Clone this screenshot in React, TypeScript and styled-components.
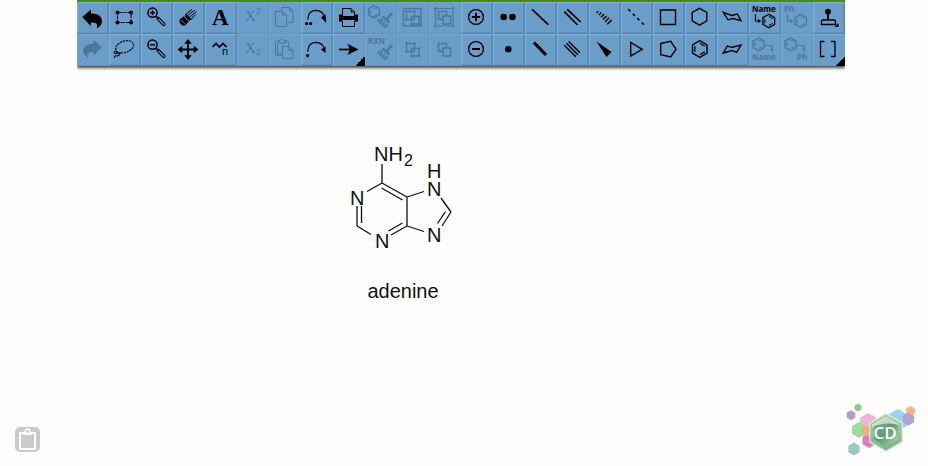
import React, { ReactNode } from "react";
import styled, { createGlobalStyle, css } from "styled-components";

const GlobalStyle = createGlobalStyle`
  *, *::before, *::after { box-sizing: border-box; }
  body {
    margin: 0;
    background: #fdfdfd;
    color: #000;
    font-family: "Liberation Sans", Arial, sans-serif;
  }
`;

const Page = styled.div`
  display: flex;
  flex-direction: column;
  min-height: 100vh;
`;

const Header = styled.header`
  display: flex;
  justify-content: center;
  padding-right: 6px;
`;

const Toolbar = styled.div`
  display: grid;
  grid-template-columns: repeat(24, 32px);
  grid-auto-rows: 32px;
  border-top: 2px solid #478b10;
  background: #6b9dc9;
  box-shadow: 0 2px 3px rgba(0, 0, 0, 0.75);
  clip-path: inset(0 0 -8px 0);
`;

const ToolButton = styled.button<{ $menu?: boolean }>`
  display: block;
  padding: 0;
  border: 1px solid;
  border-color: #7fb0da #5684b0 #5684b0 #7fb0da;
  background: #6b9dc9;
  box-shadow: inset -1px -1px 0 #6291be, inset 1px 1px 0 #71a3cf;
  color: #000;
  cursor: pointer;

  &:disabled {
    border-color: #75a6d1 #6392be #6392be #75a6d1;
    box-shadow: none;
    color: #4b769d;
    cursor: default;
  }

  ${(p) =>
    p.$menu &&
    css`
      background: linear-gradient(135deg, transparent 50%, #000 50%) right
          bottom / 10px 10px no-repeat border-box,
        #6b9dc9;
      border-right-color: transparent;
      border-bottom-color: transparent;
      box-shadow: none;
    `}
`;

const Glyph = styled.svg`
  display: block;
  width: 32px;
  height: 32px;
  margin: -1px;
  fill: none;
  stroke: currentColor;
  stroke-width: 1;
`;

const Letters = styled.text<{ $size: number; $serif?: boolean; $bold?: boolean }>`
  fill: currentColor;
  stroke: none;
  font-family: ${(p) =>
    p.$serif ? '"Liberation Serif", serif' : '"Noto Sans", sans-serif'};
  font-size: ${(p) => p.$size}px;
  font-weight: ${(p) => (p.$bold ? 700 : 400)};
`;

const Canvas = styled.main`
  flex: 1;
  padding: 74px 0 0 340px;
`;

const Structure = styled.figure`
  display: flex;
  flex-direction: column;
  align-items: center;
  gap: 26px;
  width: 126px;
  margin: 0;
`;

const Molecule = styled.svg`
  display: block;
  width: 126px;
  height: 114px;
  fill: none;
  stroke: #111;
  stroke-width: 1.3;
`;

const Atom = styled.text<{ $small?: boolean }>`
  fill: #111;
  stroke: none;
  font-family: "Liberation Sans", Arial, sans-serif;
  font-size: ${(p) => (p.$small ? 16 : 20)}px;
`;

const Caption = styled.figcaption`
  color: #111;
  font-size: 20px;
  line-height: 22px;
`;

const Footer = styled.footer`
  display: flex;
  justify-content: space-between;
  align-items: flex-end;
  padding: 0 10px 8px 15px;
`;

const ClipboardButton = styled.button`
  width: 25px;
  height: 25px;
  margin-bottom: 6px;
  padding: 0;
  border: 0;
  border-radius: 5px;
  background: #cacaca;
  cursor: pointer;
`;

const ClipboardIcon = styled.svg`
  display: block;
  width: 25px;
  height: 25px;
  fill: none;
  stroke: #fff;
`;

const LogoLink = styled.a`
  display: block;
`;

const LogoMark = styled.svg`
  display: block;
  width: 74px;
  height: 58px;
`;

const LogoText = styled.text`
  fill: #fff;
  font-family: "Open Sans", sans-serif;
  font-size: 17px;
  font-weight: 600;
  text-anchor: middle;
`;

const hex = (x: number, y: number, r: number) =>
  [-90, -30, 30, 90, 150, 210]
    .map((a) => {
      const t = (a * Math.PI) / 180;
      return `${(x + r * Math.cos(t)).toFixed(2)},${(y + r * Math.sin(t)).toFixed(2)}`;
    })
    .join(" ");

const Benzene = ({ x, y, r }: { x: number; y: number; r: number }) => {
  const p = (a: number, k: number) => {
    const t = (a * Math.PI) / 180;
    return `${(x + k * Math.cos(t)).toFixed(2)} ${(y + k * Math.sin(t)).toFixed(2)}`;
  };
  const k = r * 0.68;
  return (
    <>
      <polygon points={hex(x, y, r)} strokeWidth={r > 7 ? 1.4 : 1.3} />
      <path
        d={[-90, 30, 150].map((a) => `M${p(a, k)}L${p(a + 60, k)}`).join("")}
        strokeWidth={r > 7 ? 1.3 : 1}
      />
    </>
  );
};

const Magnifier = ({ plus }: { plus?: boolean }) => (
  <>
    <circle cx="11.5" cy="10.7" r="4.6" strokeWidth="1.5" />
    <path d={plus ? "M9 10.7h5M11.5 8.2v5" : "M9 10.7h5"} strokeWidth="1.6" />
    <path d="M14.7 14l1.8 1.8" strokeWidth="1.6" />
    <path d="M16 17l1.6-1.6 6 6q.9 1.2 0 2-.9.6-1.8-.2z" strokeWidth="1.1" />
  </>
);

const Broom = () => (
  <>
    <path d="M27 11L21.6 17.4" strokeWidth="2.6" />
    <path d="M17.6 14.4l6.8 6.4" strokeWidth="2.2" />
    <path d="M16.2 16Q15 18 12.8 18.5l6.6 6.8q3-.6 3.8-3.7" strokeWidth="1.3" />
    <path d="M14.8 20.5l3.4-2.2M16.6 22.4l3.6-2.6M18.4 24.2l3.2-2.8M16 18.4l2-1.2" strokeWidth="1.2" />
  </>
);

const CurvedArrow = ({ pair }: { pair?: boolean }) => (
  <>
    <path d="M6.7 17.6Q7.2 8.5 15 8.3q6.800 0 8.300 7" strokeWidth="1.2" />
    <path d={pair ? "M20 15.500l4.500-3.200.8 8.700z" : "M20 15.500l4.700-3-.3 6.500z"} fill="currentColor" stroke="none" />
    <circle cx={pair ? 5.6 : 6.6} cy="21.6" r="1.6" fill="currentColor" stroke="none" />
    {pair && <circle cx="9.6" cy="21.6" r="1.6" fill="currentColor" stroke="none" />}
  </>
);

const Overlap = ({ handles }: { handles?: boolean }) =>
  handles ? (
    <>
      <path d="M9.5 9.5h8v8h-8zM14.5 14.5h7.5v7.5h-7.5z" strokeWidth="1.3" />
      <path d="M8 9.5h3M9.5 8v3M16 9.5h3M17.5 8v3M8 17.5h3M9.5 16v3M20.5 14.5h3M22 13v3M13 22h3M14.5 20.5v3M20.5 22h3M22 20.5v3" />
    </>
  ) : (
    <path d="M13.500 17.5H9.5v-8h8v4M14 14h7.5v8h-7.5z" strokeWidth="1.4" />
  );

const Dot = ({ x, y, r }: { x: number; y: number; r: number }) => (
  <circle cx={x} cy={y} r={r} fill="currentColor" stroke="none" />
);

interface Tool {
  label: string;
  icon: ReactNode;
  disabled?: boolean;
  menu?: boolean;
}

const tools: Tool[] = [
  {
    label: "Undo",
    icon: <path d="M5.3 15L14 7.6v4q6.500-.2 9.300 3 2.400 3 1.300 7-1 3-4 4.400-1.500.2-.5-1.600 1-4.200-6.100-3.900v3.700z" fill="currentColor" stroke="none" />,
  },
  {
    label: "Select box",
    icon: (
      <>
        <path d="M8.500 10.500h13.500v10H8.500z" strokeDasharray="4 1" />
        <Dot x={8.5} y={10.5} r={2} />
        <Dot x={22} y={10.5} r={2} />
        <Dot x={8.5} y={20.5} r={2} />
        <Dot x={22} y={20.5} r={2} />
      </>
    ),
  },
  { label: "Zoom in", icon: <Magnifier plus /> },
  {
    label: "Eraser",
    icon: (
      <>
        <path d="M7.200 17.500l3.300-2.500 4.800 4.700-3.600 3.300q-2 .8-4-1.400-1.300-2-.5-4.100z" fill="currentColor" />
        <path d="M12.500 13.300l4.700 4.700" strokeWidth="2.800" />
        <path d="M12 13L19 7.500M14 14l8-6M15.500 16l8-6.500M17.500 18l5-5.500" />
        <path d="M8.200 18.600q2.200.4 3.700 3.200" stroke="#6b9dc9" strokeWidth=".8" />
      </>
    ),
  },
  { label: "Text", icon: <Letters x="7" y="23" $size={23} $serif $bold>A</Letters> },
  {
    label: "Superscript",
    disabled: true,
    icon: (
      <>
        <Letters x="8" y="19" $size={15} $serif>X</Letters>
        <Letters x="19" y="12" $size={9} $serif>2</Letters>
      </>
    ),
  },
  {
    label: "Copy",
    disabled: true,
    icon: (
      <>
        <path d="M12.5 9.5v-4h8l3.5 3.5v11.5h-6M20.5 5.5v3.5h3.5" />
        <path d="M6.5 9.5h7.5l3.5 3.5v11.5h-11zM14 9.5v3.5h3.5" />
      </>
    ),
  },
  { label: "Electron pair arrow", icon: <CurvedArrow pair /> },
  {
    label: "Print",
    icon: (
      <>
        <path d="M9.500 14v-7.500h8.500l3.500 3.500v4M18 6.500v3.500h3.500M9.500 19v5.500h12v-5.500" />
        <path d="M6 12.500h3v1.500h12.800v-1.500H25v7h-3.200V18H9v1.500H6z" fill="currentColor" stroke="none" />
      </>
    ),
  },
  {
    label: "Clean structure",
    disabled: true,
    icon: (
      <>
        <Benzene x={9} y={9.7} r={6.2} />
        <Broom />
      </>
    ),
  },
  {
    label: "Group",
    disabled: true,
    icon: (
      <>
        <path d="M6.5 6.5h17.5v17.5H6.5z" strokeWidth="1.4" />
        <Overlap handles />
      </>
    ),
  },
  {
    label: "Ungroup",
    disabled: true,
    icon: (
      <>
        <path d="M6.5 6.5h17.5v17.5H6.5zM5 6.5h3M6.5 5v3M22.5 6.5h3M24 5v3M5 24h3M6.5 22.5v3M22.5 24h3M24 22.5v3" strokeWidth="1.2" />
        <Overlap />
      </>
    ),
  },
  {
    label: "Positive charge",
    icon: (
      <>
        <circle cx="15" cy="15" r="7.4" strokeWidth="1.4" />
        <path d="M10.8 15h8.4M15 10.8v8.4" strokeWidth="2" />
      </>
    ),
  },
  {
    label: "Electron pair",
    icon: (
      <>
        <Dot x={10.7} y={15} r={3.3} />
        <Dot x={19.5} y={15} r={3.3} />
      </>
    ),
  },
  { label: "Single bond", icon: <path d="M7 7.3L23.3 22.7" strokeWidth="1.7" /> },
  { label: "Double bond", icon: <path d="M10.3 7.3L23.7 20M7.3 9.7L20.7 23" strokeWidth="1.7" /> },
  {
    label: "Hashed bond",
    icon: <path d="M7.5 10.8l1.8-1.6M9.800 12.900l2.600-2.400M12 15.200l3-2.900M14 17.500l3.600-3.500M16 19.900l4.200-4.100M18.200 22.300l4.600-4.400" strokeWidth="1.4" />,
  },
  { label: "Dashed bond", icon: <path d="M7.3 7.3L23 22.7" strokeWidth="1.6" strokeDasharray="3 3.300" /> },
  { label: "Cyclobutane", icon: <path d="M7.5 8h15v14.5h-15z" strokeWidth="1.4" /> },
  { label: "Cyclohexane", icon: <polygon points={hex(14.5, 14.7, 8.4)} strokeWidth="1.4" /> },
  {
    label: "Chair",
    icon: <path d="M6.3 10.3L11 17.8 15.7 16.5 24 18.7 20.3 12 14.7 13.5z" strokeWidth="1.4" />,
  },
  {
    label: "Name to structure",
    icon: (
      <>
        <Letters x="3" y="10" $size={8} $bold>Name</Letters>
        <path d="M6.500 12v7h3" strokeWidth="1.2" />
        <path d="M9 17l3.400 2-3.400 2z" fill="currentColor" stroke="none" />
        <Benzene x={19.8} y={19} r={6.8} />
      </>
    ),
  },
  {
    label: "Expand label",
    disabled: true,
    icon: (
      <>
        <Letters x="3" y="10" $size={8} $bold>Ph</Letters>
        <path d="M6.500 12v7h3" strokeWidth="1.2" />
        <path d="M9 17l3.400 2-3.400 2z" fill="currentColor" stroke="none" />
        <Benzene x={19.8} y={19} r={6.6} />
      </>
    ),
  },
  {
    label: "Templates",
    icon: (
      <>
        <Dot x={15} y={9.7} r={2.9} />
        <path d="M15 11v7" strokeWidth="2" />
        <path d="M8.5 22.5v-3q0-1.500 1.500-1.500h11q1.500 0 1.500 1.500v3z" strokeWidth="1.4" />
        <path d="M25.500 21v4h-4z" fill="currentColor" stroke="none" />
      </>
    ),
  },
  {
    label: "Redo",
    disabled: true,
    icon: <path d="M25 13.200L16.600 6v3.800q-6 0-8.900 2.800-2.500 3-1.300 6.600 1 2.600 3.800 3.800 1.500.2.500-1.400-1-4 5.900-3.700v3.500z" fill="currentColor" stroke="none" />,
  },
  {
    label: "Lasso",
    icon: (
      <>
        <path d="M8.5 18.5Q4.5 14 9.5 9.800 15 5.500 21 7q5 2 3 6.300-4 5.700-11.500 5.500" strokeDasharray="2 1" strokeWidth="1.2" />
        <path d="M12.500 18.700q-3 .7-4.700-.8-2-1.400-2.600.4 0 1.900 3.300.8 2.400-.7 2 1.300-.8 2-3 1.400-2.200-.2-2 2" strokeWidth="1.1" />
      </>
    ),
  },
  { label: "Zoom out", icon: <Magnifier /> },
  {
    label: "Move",
    icon: (
      <>
        <path d="M15 8v15M7.500 15.500h15" strokeWidth="1.8" />
        <path d="M15 5l3.700 4.700h-7.400zM15 26l3.700-4.700h-7.400zM4.500 15.500l4.700-3.700v7.400zM25.500 15.500l-4.700-3.700v7.400z" fill="currentColor" stroke="none" />
      </>
    ),
  },
  {
    label: "Chain",
    icon: (
      <>
        <path d="M7.500 13l3.500-3.500 3.500 3.500 3.500-3.500 3.500 3.500" strokeWidth="1.700" />
        <Letters x="17" y="21" $size={10}>n</Letters>
      </>
    ),
  },
  {
    label: "Subscript",
    disabled: true,
    icon: (
      <>
        <Letters x="8" y="19" $size={15} $serif>X</Letters>
        <Letters x="19" y="21" $size={9} $serif>2</Letters>
      </>
    ),
  },
  {
    label: "Paste",
    disabled: true,
    icon: (
      <>
        <path d="M13 21.500H8q-1.500 0-1.500-1.500V8.500Q6.500 7 8 7h1.500M16.500 7H18q1.500 0 1.500 1.500v3M9.500 9h7V6.500h-2Q14.300 5 13 5t-1.500 1.500h-2zM8.500 9.500v10H13" />
        <path d="M13.500 12.500H20l4 4v8H13.500zM20 12.500v4h4" />
      </>
    ),
  },
  { label: "Single electron arrow", icon: <CurvedArrow /> },
  {
    label: "Reaction arrow",
    menu: true,
    icon: (
      <>
        <path d="M6 15.500h12" strokeWidth="1.700" />
        <path d="M14.500 9.800L25.500 15.500 14.500 21l2.200-5.500z" fill="currentColor" stroke="none" />
      </>
    ),
  },
  {
    label: "Clean reaction",
    disabled: true,
    icon: (
      <>
        <Letters x="3" y="10" $size={8} $bold>RXN</Letters>
        <Broom />
      </>
    ),
  },
  { label: "Bring forward", disabled: true, icon: <Overlap handles /> },
  { label: "Send back", disabled: true, icon: <Overlap /> },
  {
    label: "Negative charge",
    icon: (
      <>
        <circle cx="15" cy="15" r="7.4" strokeWidth="1.4" />
        <path d="M11 15h8" strokeWidth="2" />
      </>
    ),
  },
  { label: "Single electron", icon: <Dot x={15.3} y={15.3} r={3.3} /> },
  { label: "Bold bond", icon: <path d="M9 8.500L21 21" strokeWidth="3.2" /> },
  {
    label: "Triple bond",
    icon: <path d="M11.700 7.500L23 18.800M9.500 9.300L21 21M7.300 11.300L18.800 22.800" strokeWidth="1.4" />,
  },
  { label: "Wedge bond", icon: <path d="M7.300 7.300L22.500 18 17.500 23z" fill="currentColor" stroke="none" /> },
  { label: "Cyclopropane", icon: <path d="M9.700 8.500V22l11.500-6.700z" strokeWidth="1.4" /> },
  { label: "Cyclopentane", icon: <path d="M7.700 9.500L17.700 7.300 23 15.200 17.700 23 7.700 20.800z" strokeWidth="1.4" /> },
  { label: "Benzene", icon: <Benzene x={14.8} y={15} r={8.4} /> },
  {
    label: "Inverted chair",
    icon: <path d="M6.300 19L10.300 12 15 13.300 24 11 19.700 18.300 15 16.500z" strokeWidth="1.4" />,
  },
  {
    label: "Structure to name",
    disabled: true,
    icon: (
      <>
        <Benzene x={9.7} y={10.3} r={6.4} />
        <path d="M16.500 11.500H23v4" strokeWidth="1.2" />
        <path d="M21.300 15h3.400L23 18z" fill="currentColor" stroke="none" />
        <Letters x="3" y="26" $size={8} $bold>Name</Letters>
      </>
    ),
  },
  {
    label: "Contract label",
    disabled: true,
    icon: (
      <>
        <Benzene x={9.7} y={10.3} r={6.4} />
        <path d="M16.500 11.500H23v4" strokeWidth="1.2" />
        <path d="M21.300 15h3.400L23 18z" fill="currentColor" stroke="none" />
        <Letters x="16" y="26" $size={8} $bold>Ph</Letters>
      </>
    ),
  },
  {
    label: "Brackets",
    menu: true,
    icon: <path d="M11.500 7.500h-4v15h4M18 7.500h4v15h-4" strokeWidth="1.3" />,
  },
];

export default function App() {
  return (
    <>
      <GlobalStyle />
      <Page>
        <Header>
          <Toolbar role="toolbar" aria-label="Drawing tools">
            {tools.map((tool) => (
              <ToolButton
                key={tool.label}
                type="button"
                aria-label={tool.label}
                disabled={tool.disabled}
                $menu={tool.menu}
              >
                <Glyph viewBox="0 0 32 32" aria-hidden="true">
                  {tool.icon}
                </Glyph>
              </ToolButton>
            ))}
          </Toolbar>
        </Header>
        <Canvas>
          <Structure>
            <Molecule viewBox="340 140 126 114" role="img" aria-label="Adenine structure">
              <path d="M382 164v19M382 183l-15 8.500M382 183l25 14M381.500 188l21 12M407 197v29M407 197l17-5.500M441 198l10 14M451 212l-9 14M445.500 211.500l-8 12M424 231.500l-17-5.500M407 226l-16 9M402.500 223l-14 8M371 234.500l-14-8.500M357 226v-20M361.500 223v-17" />
              <Atom x="374" y="161">NH</Atom>
              <Atom x="404" y="166" $small>2</Atom>
              <Atom x="427" y="178">H</Atom>
              <Atom x="427" y="196">N</Atom>
              <Atom x="350" y="205">N</Atom>
              <Atom x="375" y="248">N</Atom>
              <Atom x="427" y="242">N</Atom>
            </Molecule>
            <Caption>adenine</Caption>
          </Structure>
        </Canvas>
        <Footer>
          <ClipboardButton type="button" aria-label="Clipboard">
            <ClipboardIcon viewBox="0 0 25 25" aria-hidden="true">
              <path d="M5 6h15v16H5z" strokeWidth="2" />
              <path d="M8 5h9v3H8z" fill="#fff" stroke="none" />
              <circle cx="12.5" cy="4.5" r="2.3" fill="#cacaca" strokeWidth="1.7" />
            </ClipboardIcon>
          </ClipboardButton>
          <LogoLink href="#about" aria-label="About">
            <LogoMark viewBox="844 400 74 58">
              <defs>
                <linearGradient id="rim" x1="0" y1="0" x2="0" y2="1">
                  <stop offset="0" stopColor="#a9cfa8" />
                  <stop offset="1" stopColor="#7db58a" />
                </linearGradient>
                <linearGradient id="core" x1="0" y1="0" x2="1" y2="1">
                  <stop offset="0" stopColor="#7fb08c" />
                  <stop offset=".5" stopColor="#5d9c78" />
                  <stop offset="1" stopColor="#b4deae" />
                </linearGradient>
              </defs>
              <polygon points={hex(858, 407.5, 4)} fill="#8bcb86" />
              <polygon points={hex(851, 415.2, 5)} fill="#b49ccb" />
              <polygon points={hex(868, 422, 9)} fill="#edb5d8" />
              <polygon points={hex(859, 430, 8)} fill="#9cdda0" />
              <polygon points={hex(869, 440.5, 7.5)} fill="#dc80bb" />
              <polygon points={hex(866.5, 431, 5.5)} fill="#f2ad80" />
              <polygon points={hex(854, 449, 6.5)} fill="#98cbc3" />
              <polygon points={hex(898, 420, 11)} fill="#96d5ef" />
              <polygon points={hex(910.5, 411, 5)} fill="#f5b482" />
              <polygon points={hex(908.5, 419, 6.5)} fill="#b5a0d0" />
              <polygon points={hex(886, 432.5, 19.5)} fill="#e0e8df" />
              <polygon points={hex(886, 432.5, 18)} fill="url(#rim)" />
              <polygon points={hex(886, 432.5, 14)} fill="url(#core)" />
              <path d="M872 424.5l13.500-7.500 14.500 8q-15-4-28 2z" fill="#e2f1df" opacity=".7" />
              <LogoText x="885" y="439">CD</LogoText>
            </LogoMark>
          </LogoLink>
        </Footer>
      </Page>
    </>
  );
}
